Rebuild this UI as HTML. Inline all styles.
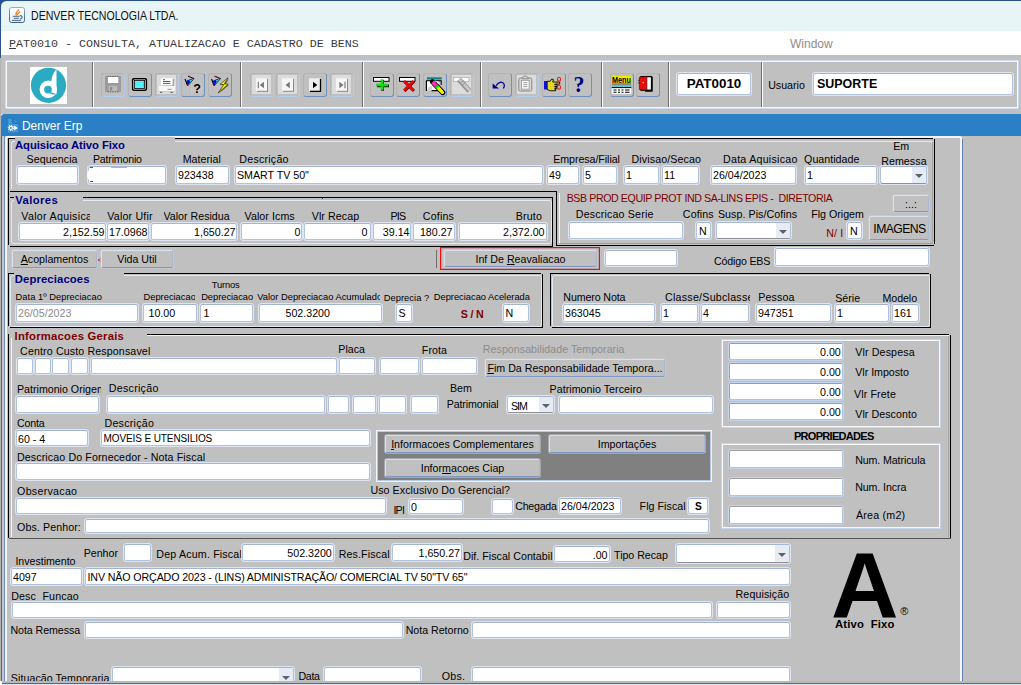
<!DOCTYPE html>
<html><head><meta charset="utf-8"><title>DENVER TECNOLOGIA LTDA.</title>
<style>
html,body{margin:0;padding:0}
body{width:1021px;height:685px;overflow:hidden;background:#c0c0c0;position:relative;
 font-family:"Liberation Sans",sans-serif;font-size:10.67px;color:#000}
div{position:absolute;box-sizing:border-box}
.ln{overflow:hidden}
.l{white-space:nowrap;line-height:14px;height:14px}
.f{background:#fff;border:1px solid #b1c2df;border-radius:2.5px;white-space:nowrap;overflow:hidden;
 box-shadow:0 0 0 1px rgba(230,238,251,.8)}
.f{border-top-color:#a2b4d3}
.s{border-top-color:#9c9ca2;border-left-color:#a2a2a8;box-shadow:0 0 0 1px #c5d4ed;border-radius:2px}
.dd{border-bottom-color:#8f9097}
.bx{border:1px solid #c6d6ef;box-shadow:inset 0 0 0 1px #f6f8fd}
.b{background:#c0c0c0;border:1px solid #d9e1ee;border-bottom-color:#7d99c4;border-right-color:#a9b9d3;border-radius:2px;
 text-align:center;white-space:nowrap;overflow:hidden;box-shadow:0 0 0 1px rgba(200,205,215,.5)}
.fi{border:1px solid #e2e9f6;border-radius:2.5px}
.tb{background:#c0c0c0;border:1px solid #b3b3b3;border-bottom-color:#7090be;border-right-color:#7090be;border-radius:3px;width:24px;height:24px;overflow:hidden}
.tb.dis{border-bottom-color:#b3cbec;border-right-color:#b3cbec}
.tb svg{position:absolute;left:0;top:0}
u{text-decoration:underline}
</style></head><body>

<div class="" style="left:0px;top:0px;width:1021px;height:31px;background:#e8f5f7"></div>
<div class="" style="left:0px;top:31px;width:1021px;height:24px;background:#fff"></div>
<div class="ln" style="left:0px;top:0px;width:1021px;height:1px;background:#2c4f8e"></div>
<div class="ln" style="left:0px;top:0px;width:1px;height:58px;background:#2c4f8e"></div>
<div class="ln" style="left:0;top:0;width:7px;height:7px;background:#27508f"><div style="left:1px;top:1px;width:12px;height:12px;background:#e8f5f7;border-top-left-radius:5.5px"></div></div>
<svg style="position:absolute;left:9px;top:7px" width="16" height="16" viewBox="0 0 16 16">
<defs><linearGradient id="jb" x1="0" y1="0" x2="0" y2="1"><stop offset="0" stop-color="#92abc6"/><stop offset="1" stop-color="#3d5f80"/></linearGradient>
<linearGradient id="jf" x1="0" y1="0" x2="0" y2="1"><stop offset="0" stop-color="#ffffff"/><stop offset="1" stop-color="#e6e8ea"/></linearGradient></defs>
<rect x="0.5" y="0.5" width="15" height="15" rx="2" fill="url(#jf)" stroke="url(#jb)"/>
<path d="M9.900 2.600L6.900 6.300l.3 2.200" stroke="#e8750a" stroke-width="1.500" fill="none" stroke-dasharray="1.300 .35"/>
<path d="M11 4.700L8.300 7l-.4 1.500" stroke="#e8750a" stroke-width="1.400" fill="none" stroke-dasharray="1.300 .35"/>
<path d="M3.800 9.300h6.800M4.900 11.300h5M3.100 13.400h8.900" stroke="#46688c" stroke-width="1" fill="none"/>
<path d="M11 8.600c2.800-.3 2.800 3.200.1 3.400" stroke="#46688c" stroke-width="1.100" fill="none"/>
</svg>
<div class="l" style="left:30.5px;top:8px;font-size:11.9px;line-height:17px;height:17px;color:#101010;transform-origin:0 0;transform:scaleX(.888)">DENVER TECNOLOGIA LTDA.</div>
<div class="l" style="left:9px;top:35.5px;font-family:'Liberation Mono',monospace;font-size:11.67px;line-height:16px;height:16px;color:#3a3a3a"><u>P</u>AT0010 - CONSULTA, ATUALIZACAO E CADASTRO DE BENS</div>
<div class="l" style="left:790px;top:36px;font-size:12px;line-height:16px;height:16px;color:#8c8c8c">Window</div>
<div class="" style="left:5px;top:60px;width:1014px;height:49px;border:1px solid #cbdbf3;border-radius:1px;box-shadow:inset 0 0 0 1px #f7f9fe"></div>
<div class="ln" style="left:92px;top:62px;width:1px;height:45px;background:#6e6e6e"></div>
<div class="ln" style="left:93px;top:62px;width:1px;height:45px;background:#fdfdfd"></div>
<div class="ln" style="left:240px;top:62px;width:1px;height:45px;background:#6e6e6e"></div>
<div class="ln" style="left:241px;top:62px;width:1px;height:45px;background:#fdfdfd"></div>
<div class="ln" style="left:362px;top:62px;width:1px;height:45px;background:#6e6e6e"></div>
<div class="ln" style="left:363px;top:62px;width:1px;height:45px;background:#fdfdfd"></div>
<div class="ln" style="left:480px;top:62px;width:1px;height:45px;background:#6e6e6e"></div>
<div class="ln" style="left:481px;top:62px;width:1px;height:45px;background:#fdfdfd"></div>
<div class="ln" style="left:601px;top:62px;width:1px;height:45px;background:#6e6e6e"></div>
<div class="ln" style="left:602px;top:62px;width:1px;height:45px;background:#fdfdfd"></div>
<div class="ln" style="left:668px;top:62px;width:1px;height:45px;background:#6e6e6e"></div>
<div class="ln" style="left:669px;top:62px;width:1px;height:45px;background:#fdfdfd"></div>
<div class="ln" style="left:761px;top:62px;width:1px;height:45px;background:#6e6e6e"></div>
<div class="ln" style="left:762px;top:62px;width:1px;height:45px;background:#fdfdfd"></div>
<svg style="position:absolute;left:30px;top:67px" width="37" height="37" viewBox="0 0 37 37">
<rect width="37" height="37" fill="#fff"/>
<circle cx="18.5" cy="18.3" r="17.6" fill="#2aabc2"/>
<circle cx="18.3" cy="22.3" r="8.7" fill="#fff"/>
<path d="M25.700 3h.8v24.300l-5.700-.3.500-12.100c.2-3.900 1.200-8 4.400-11.900z" fill="#fff"/>
<circle cx="18" cy="22.600" r="3.900" fill="#2aabc2"/>
<path d="M20 25.600c1.500.9 3.300 1.300 5 1.200" stroke="#2aabc2" stroke-width="1.300" fill="none"/>
</svg>
<div class="tb dis" style="left:101px;top:73px"><svg width="24" height="24" viewBox="0 0 24 24" style="left:-1px;top:-1px"><rect x="4" y="3" width="16" height="16" rx="1" fill="#9b9b9b"/><rect x="7" y="4" width="10.3" height="6" fill="#fff"/><rect x="7.7" y="12.7" width="8.6" height="6" fill="#bababa"/><rect x="9" y="14" width="2.2" height="3.5" fill="#8a8a8a"/><path d="M6.5 3.300h11M6.5 18.800h11" stroke="#5a5a5a" stroke-width="1" stroke-dasharray="1.2 1.2"/><rect x="4.6" y="5" width=".8" height=".8" fill="#777"/></svg></div>
<div class="tb" style="left:128px;top:73px"><svg width="24" height="24" viewBox="0 0 24 24" style="left:-1px;top:-1px"><rect x="3.9" y="4.9" width="15.2" height="13" rx="1.8" fill="#000"/><rect x="5.4" y="6.4" width="12.2" height="10" rx=".6" fill="#fff"/><rect x="6.4" y="7.4" width="10.2" height="8" fill="none" stroke="#000" stroke-width=".8"/><rect x="7" y="8" width="9" height="6.8" fill="#19e6f0"/><path d="M7.5 9h8M7.5 10.700h8M7.5 12.400h8M7.5 14.100h8" stroke="#d8ffff" stroke-width=".7" stroke-dasharray="1 1"/><path d="M8 8v7M10 8v7M12 8v7M14 8v7" stroke="#d8ffff" stroke-width=".5" stroke-dasharray="1 .7"/></svg></div>
<div class="tb dis" style="left:155px;top:73px"><svg width="24" height="24" viewBox="0 0 24 24" style="left:-1px;top:-1px"><rect x="2" y="2" width="19" height="19" fill="#dcdcdc"/><rect x="6" y="5.3" width="12" height="7.6" fill="#fff"/><path d="M18.200 6v7M6.5 13h12" stroke="#777" stroke-width=".8"/><path d="M8 6.700h2M8 8.500h7.400M8 10.400h7.400" stroke="#4a4a4a" stroke-width=".9"/><rect x="3.9" y="13.3" width="16" height="5" fill="#f6f6f6"/><path d="M4 13.600h16" stroke="#fff" stroke-width=".8"/><path d="M12.5 16.300h4" stroke="#999" stroke-width="1"/><path d="M4 18.500h16" stroke="#c4c4c4" stroke-width=".8"/><rect x="5" y="18.9" width="2.2" height="1.1" fill="#666"/><rect x="15.5" y="18.9" width="2.2" height="1.1" fill="#666"/></svg></div>
<div class="tb" style="left:181px;top:73px"><svg width="24" height="24" viewBox="0 0 24 24" style="left:-1px;top:-1px"><path d="M4 6l2.500 6.500" stroke="#000" stroke-width="1.1"/><path d="M6.5 12.800l-1.200-5 6.500-2.500z" fill="#0a0ac8"/><path d="M8.200 7.600l4.800-1.800-3.200 3.600z" fill="#16e0f0"/><path d="M7 3.200l6 2.400" stroke="#000" stroke-width="1"/><path d="M13 5.500l-6.300 7.500" stroke="#000" stroke-width=".7"/><rect x="7.8" y="2.7" width="1.3" height="1.1" fill="#e01010"/><path d="M10 11.500h11M10 13.500h11M10 15.500h11M10 17.500h11M10 19.500h11" stroke="#f4ec00" stroke-width="1" stroke-dasharray="1 1"/><text x="12.3" y="19.8" font-family="Liberation Sans" font-weight="bold" font-size="12.5" fill="#000">?</text></svg></div>
<div class="tb" style="left:208px;top:73px"><svg width="24" height="24" viewBox="0 0 24 24" style="left:-1px;top:-1px"><g transform="translate(-.5 0)"><path d="M4 6l2.500 6.500" stroke="#000" stroke-width="1.1"/><path d="M6.5 12.800l-1.200-5 6.500-2.500z" fill="#0a0ac8"/><path d="M8.200 7.600l4.800-1.800-3.200 3.600z" fill="#16e0f0"/><path d="M7 3.200l6 2.400" stroke="#000" stroke-width="1"/><path d="M13 5.500l-6.300 7.500" stroke="#000" stroke-width=".7"/><rect x="7.8" y="2.7" width="1.3" height="1.1" fill="#e01010"/></g><path d="M20.800 5.800l-7.500 6 3.500.3-5.500 8.200 9.800-8.400-3.600-.4z" fill="#6a6a6a"/><path d="M20 4.800l-8 6.500 3.800.3-5.600 8.400 10-8.800-3.800-.3z" fill="#fbf400" stroke="#000" stroke-width=".55"/></svg></div>
<div class="tb dis" style="left:250px;top:73px"><svg width="24" height="24" viewBox="0 0 24 24" style="left:-1px;top:-1px"><rect x="2" y="2" width="19" height="19" fill="#dcdcdc"/><rect x="6" y="5.3" width="11" height="12.6" fill="#f6f6f6"/><path d="M17.500 6v12.600M7 18.300h11" stroke="#8a8a8a" stroke-width="1"/><path d="M8.300 8.700v6.500" stroke="#7a7a7a" stroke-width="1.2"/><path d="M14 8.700v6.500l-4.300-3.250z" fill="#7a7a7a"/></svg></div>
<div class="tb dis" style="left:276px;top:73px"><svg width="24" height="24" viewBox="0 0 24 24" style="left:-1px;top:-1px"><rect x="2" y="2" width="19" height="19" fill="#dcdcdc"/><rect x="6" y="5.3" width="11" height="12.6" fill="#f6f6f6"/><path d="M17.500 6v12.600M7 18.300h11" stroke="#8a8a8a" stroke-width="1"/><path d="M13.8 8.700v6.500l-4.300-3.250z" fill="#7a7a7a"/></svg></div>
<div class="tb" style="left:303px;top:73px"><svg width="24" height="24" viewBox="0 0 24 24" style="left:-1px;top:-1px"><rect x="6" y="5.3" width="11" height="12.6" fill="#efefef"/><path d="M17.500 6v12.600M7 18.300h11" stroke="#000" stroke-width="1.3"/><path d="M10 8.700v6.500l4.300-3.250z" fill="#000"/></svg></div>
<div class="tb dis" style="left:330px;top:73px"><svg width="24" height="24" viewBox="0 0 24 24" style="left:-1px;top:-1px"><rect x="2" y="2" width="19" height="19" fill="#dcdcdc"/><rect x="6" y="5.3" width="11" height="12.6" fill="#f6f6f6"/><path d="M17.500 6v12.600M7 18.300h11" stroke="#8a8a8a" stroke-width="1"/><path d="M15 8.700v6.500" stroke="#7a7a7a" stroke-width="1.2"/><path d="M9.3 8.700v6.500l4.300-3.250z" fill="#7a7a7a"/></svg></div>
<div class="tb" style="left:370px;top:73px"><svg width="24" height="24" viewBox="0 0 24 24" style="left:-1px;top:-1px"><rect x="3.5" y="4.5" width="15.5" height="3.8" fill="#fff" stroke="#000" stroke-width="1"/><path d="M12.600 7v10.800M7 12.800h12" stroke="#002000" stroke-width="2.800"/><path d="M12 6.200v10.800M6.200 12h11.800" stroke="#10dc10" stroke-width="2.700"/></svg></div>
<div class="tb" style="left:396px;top:73px"><svg width="24" height="24" viewBox="0 0 24 24" style="left:-1px;top:-1px"><rect x="3.5" y="4.5" width="15.5" height="3.8" fill="#fff" stroke="#000" stroke-width="1"/><path d="M8.500 8.500l9.500 9.500M18 8.500L8.500 18" stroke="#5a0000" stroke-width="3"/><path d="M8 8l9.500 9.500M17.500 8L8 17.500" stroke="#e00b0b" stroke-width="2.6"/></svg></div>
<div class="tb" style="left:423px;top:73px"><svg width="24" height="24" viewBox="0 0 24 24" style="left:-1px;top:-1px"><rect x="4" y="4.3" width="14.7" height="2.2" fill="#0d8484"/><rect x="3" y="7.2" width="15.7" height="1.1" fill="#000"/><rect x="3.5" y="8.5" width="12" height="9" fill="#fff"/><path d="M3.400 8v10" stroke="#000" stroke-width="1.2"/><path d="M8 17.600h7" stroke="#000" stroke-width="1.3"/><path d="M18.200 8v4" stroke="#000" stroke-width="1"/><path d="M4 18a5 5 0 015-5v5z" fill="#c8c8c8" opacity=".8"/><path d="M9.500 8.800l10.300 10.800" stroke="#000" stroke-width="5.2" stroke-linecap="round"/><path d="M9.600 9l3.700 3.900" stroke="#ff1cc0" stroke-width="3.8"/><path d="M13.300 12.900l2.500 2.600" stroke="#10e010" stroke-width="3.800"/><path d="M15.800 15.500l3.600 3.800" stroke="#f4f000" stroke-width="3.4" stroke-linecap="round"/><path d="M10.200 9.800l1.500 1.500" stroke="#ffe000" stroke-width="1"/><path d="M11.500 8l1.800 .5" stroke="#16e0f0" stroke-width="1.4"/></svg></div>
<div class="tb dis" style="left:450px;top:73px"><svg width="24" height="24" viewBox="0 0 24 24" style="left:-1px;top:-1px"><rect x="2" y="2" width="19" height="19" fill="#dcdcdc"/><rect x="3.5" y="4.5" width="15.5" height="3.8" fill="#fff" stroke="#b0b0b0" stroke-width=".8"/><path d="M9 6.500l10.500 11.500" stroke="#8e8e8e" stroke-width="5"/><path d="M9.300 6.200l10.500 11.500" stroke="#c6c6c6" stroke-width="3"/><path d="M10 10.500l3.500-3M12 12.500l3.500-3" stroke="#8a8a8a" stroke-width=".9"/></svg></div>
<div class="tb" style="left:488px;top:73px"><svg width="24" height="24" viewBox="0 0 24 24" style="left:-1px;top:-1px"><path d="M8.300 12.600C9.800 9.600 13 8.600 14.800 9.700c1.900 1.200 1.700 3.700.6 5.800" fill="none" stroke="#00008c" stroke-width="1.250"/><path d="M4.600 10.400v5.200h6.400z" fill="#00008c"/></svg></div>
<div class="tb dis" style="left:515px;top:73px"><svg width="24" height="24" viewBox="0 0 24 24" style="left:-1px;top:-1px"><rect x="2" y="2" width="19" height="19" fill="#dcdcdc"/><rect x="3.8" y="5" width="13" height="13" rx="1.5" fill="#d6d6d6" stroke="#868686" stroke-width="1"/><path d="M7.300 5.800c0-3.600 6-3.600 6 0z" fill="#d0d0d0" stroke="#868686" stroke-width=".9"/><rect x="6.6" y="7.3" width="7.5" height="8.8" fill="#fafafa" stroke="#8c8c8c" stroke-width=".7"/><path d="M8.300 9.700h4M8.300 11.700h4M8.300 13.700h4" stroke="#8a8a8a" stroke-width=".8"/></svg></div>
<div class="tb" style="left:542px;top:73px"><svg width="24" height="24" viewBox="0 0 24 24" style="left:-1px;top:-1px"><rect x="2" y="8" width="3" height="8.500" fill="#0a14e6"/><path d="M5.200 8.300h3l1.500-2.300 1.700.6-.7 2.500h7v2h-5v.7h2.500v1.600h-2.500v.7h2v1.500h-2v.6h1v1.500H8.500l-3.300-1.200z" fill="#f0e428" stroke="#000" stroke-width=".9"/><path d="M6.500 10h5M6.500 12h6M6.500 14h6M7.500 16h4" stroke="#a89800" stroke-width=".6" stroke-dasharray=".8 .8"/><ellipse cx="17" cy="6.200" rx="1.600" ry="2" fill="none" stroke="#f41414" stroke-width="1.100"/><ellipse cx="17" cy="14.300" rx="1.600" ry="2" fill="none" stroke="#f41414" stroke-width="1.100"/><path d="M16.500 8.200l-1.500 2 1.500 2.100" stroke="#f41414" stroke-width="1" fill="none"/></svg></div>
<div class="tb" style="left:568px;top:73px"><svg width="24" height="24" viewBox="0 0 24 24" style="left:-1px;top:-1px"><text x="5.600" y="18.700" font-family="Liberation Serif" font-weight="bold" font-size="23" fill="#000080" textLength="11" lengthAdjust="spacingAndGlyphs">?</text></svg></div>
<div class="tb" style="left:610px;top:73px"><svg width="24" height="24" viewBox="0 0 24 24" style="left:-1px;top:-1px"><rect x="1.8" y="3" width="19.5" height="7.8" fill="#f4ec00"/><text x="2" y="10" font-family="Liberation Sans" font-weight="bold" font-size="9" fill="#000" textLength="19" lengthAdjust="spacingAndGlyphs">Menu</text><path d="M2 11h19" stroke="#000" stroke-width=".6"/><rect x="1.8" y="12.2" width="19.5" height="1.4" fill="#14d8e6"/><rect x="1.8" y="14" width="19.5" height="1.1" fill="#000"/><rect x="1.8" y="15.3" width="19.5" height="5.5" fill="#fff"/><path d="M3.500 17h3M8 17h2M11.500 17h2M15 17h4.500M3.500 19.300h3M8 19.300h2M11.500 19.300h2M15 19.300h4.500" stroke="#000" stroke-width="1.1"/></svg></div>
<div class="tb" style="left:636px;top:73px"><svg width="24" height="24" viewBox="0 0 24 24" style="left:-1px;top:-1px"><rect x="5" y="3.6" width="10.5" height="13.6" fill="#fff" stroke="#000" stroke-width="1.3"/><path d="M3.300 4.200l7.600-.6v13.600l-7.600-.7z" fill="#e60e0e" stroke="#500" stroke-width=".6"/><rect x="6.6" y="9" width="1.3" height="1.3" fill="#f8e800"/><path d="M2.200 7.300h1.300M2.200 9.800h1.300" stroke="#000" stroke-width=".9"/><path d="M9 18h7.500M16 4v14" stroke="#000" stroke-width="1.5"/></svg></div>
<div class="f" style="left:677px;top:73px;width:74px;height:22px;line-height:20px;text-align:center;font-weight:bold;font-size:13.400px;">PAT0010</div>
<div class="l" style="left:768.17px;top:78.30px;">Usuario</div>
<div class="f" style="left:813px;top:73px;width:200px;height:22px;line-height:20px;padding-left:3px;font-weight:bold;font-size:13.400px;"><span style="display:inline-block;transform-origin:0 50%;transform:scaleX(.93)">SUPORTE</span></div>
<div class="" style="left:1px;top:114px;width:1020px;height:22px;background:#2b80c5;border-top-left-radius:3px"></div>
<div class="ln" style="left:1px;top:114px;width:2px;height:2px;background:#e8eef6;clip-path:polygon(0 0,100% 0,0 100%)"></div>
<svg style="position:absolute;left:6px;top:116.5px" width="15" height="17" viewBox="0 0 14 16">
<path d="M1 1h5v5h6v9H1z" fill="#3f98d8" stroke="#236fb0" stroke-width=".7"/>
<path d="M7.500 1.500l3.500 3.500h-3.500z" fill="#3f98d8" stroke="#2a78bc" stroke-width=".5"/>
<path d="M7.600 8v4.600l3.600-2.300z" fill="#fff"/>
<circle cx="4.500" cy="10.300" r="1.500" fill="none" stroke="#fff" stroke-width="1"/>
<circle cx="4.500" cy="10.300" r="2.400" fill="none" stroke="#fff" stroke-width="1" stroke-dasharray=".9 .98"/>
</svg>
<div class="l" style="left:22px;top:117.7px;font-size:12.7px;line-height:17px;height:17px;color:#fff;transform-origin:0 0;transform:scaleX(.94)">Denver Erp</div>
<div class="ln" style="left:0px;top:58px;width:1px;height:627px;background:#b4b4b4"></div>
<div class="ln" style="left:1px;top:136px;width:1px;height:547px;background:#3d65a2"></div>
<div class="ln" style="left:2px;top:136px;width:2px;height:547px;background:#c8c8c8"></div>
<div class="ln" style="left:4px;top:136px;width:1px;height:546px;background:#6a8cc0"></div>
<div class="" style="left:5px;top:136px;width:957px;height:546px;border:2px solid #f2f5fc;border-bottom:0;border-radius:2.5px 2.5px 0 0"></div>
<div class="ln" style="left:962px;top:139px;width:1px;height:542px;background:#5f80b0"></div>
<div class="ln" style="left:2px;top:681px;width:1019px;height:2px;background:#b8b8b8"></div>
<div class="ln" style="left:1px;top:683px;width:1020px;height:1px;background:#4a6b9c"></div>
<div class="ln" style="left:0px;top:684px;width:1021px;height:1px;background:#d6e4f8"></div>
<div class="ln" style="left:0;top:681px;width:2px;height:4px;background:#fff"></div>
<div class="fi" style="left:11px;top:141px;width:922px;height:48px;border-bottom:0;border-radius:2.5px 2.5px 0 0"></div>
<div class="ln" style="left:8px;top:138px;width:925px;height:1px;background:#000"></div>
<div class="ln" style="left:8px;top:138px;width:1px;height:107px;background:#000"></div>
<div class="ln" style="left:934px;top:139px;width:1px;height:105px;background:#000"></div>
<div class="ln" style="left:10px;top:191px;width:547px;height:1px;background:#000"></div>
<div class="ln" style="left:556px;top:191px;width:1px;height:55px;background:#000"></div>
<div class="ln" style="left:556px;top:245px;width:378px;height:1px;background:#000"></div>
<div class="ln" style="left:559px;top:193px;width:1px;height:50px;background:#f4f6fa"></div>
<div class="ln" style="left:560px;top:243px;width:373px;height:1px;background:#9c9c9c"></div>
<div class="ln" style="left:932px;top:142px;width:1px;height:102px;background:#a4a4a4"></div>
<div class="ln" style="left:15px;top:137px;width:160px;height:6px;background:#c0c0c0"></div>
<div class="l" style="left:15.04px;top:138.08px;color:#000080;font-weight:bold;font-size:11.3px;letter-spacing:-0.074px;">Aquisicao Ativo Fixo</div>
<div class="l" style="left:26.50px;top:152.30px;letter-spacing:0.086px;">Sequencia</div>
<div class="l" style="left:92.97px;top:152.30px;letter-spacing:-0.207px;">Patrimonio</div>
<div class="l" style="left:182.67px;top:152.30px;letter-spacing:0.039px;">Material</div>
<div class="l" style="left:239.37px;top:152.30px;letter-spacing:0.215px;">Descrição</div>
<div class="l" style="left:553.17px;top:152.30px;letter-spacing:-0.055px;">Empresa/Filial</div>
<div class="l" style="left:631.57px;top:152.30px;letter-spacing:0.105px;">Divisao/Secao</div>
<div class="l" style="left:723.07px;top:152.30px;letter-spacing:0.243px;">Data Aquisicao</div>
<div class="l" style="left:804.10px;top:152.30px;letter-spacing:0.015px;">Quantidade</div>
<div class="l" style="left:893.17px;top:139.30px;letter-spacing:-0.105px;">Em</div>
<div class="l" style="left:881.17px;top:154.30px;letter-spacing:0.073px;">Remessa</div>
<div class="f" style="left:17px;top:166px;width:61px;height:18px;line-height:16px;padding-left:1px;"></div>
<div class="f" style="left:88px;top:166px;width:78px;height:18px;line-height:16px;padding-left:1px;"></div>
<div class="ln" style="left:87px;top:168px;width:14px;height:14px;background:#fff;border-radius:50%"></div>
<div class="ln" style="left:111px;top:167px;width:16px;height:1px;background:#a9b7cf"></div>
<div class="ln" style="left:90px;top:167px;width:3px;height:1px;background:#44557f"></div>
<div class="ln" style="left:90px;top:181px;width:3px;height:1px;background:#44557f"></div>
<div class="f" style="left:176px;top:166px;width:53px;height:18px;line-height:16px;padding-left:1px;">923438</div>
<div class="f" style="left:235px;top:166px;width:308px;height:18px;line-height:16px;padding-left:1px;">SMART TV 50"</div>
<div class="f" style="left:547px;top:166px;width:32px;height:18px;line-height:16px;padding-left:1px;">49</div>
<div class="f" style="left:583px;top:166px;width:34px;height:18px;line-height:16px;padding-left:1px;">5</div>
<div class="f" style="left:624px;top:166px;width:35px;height:18px;line-height:16px;padding-left:1px;">1</div>
<div class="f" style="left:662px;top:166px;width:37px;height:18px;line-height:16px;padding-left:1px;">11</div>
<div class="f" style="left:711px;top:166px;width:85px;height:18px;line-height:16px;padding-left:1px;">26/04/2023</div>
<div class="f" style="left:805px;top:166px;width:72px;height:18px;line-height:16px;padding-left:1px;">1</div>
<div class="f dd" style="left:880px;top:166px;width:47px;height:18px;line-height:16px;padding-left:5px;"><div style="position:absolute;right:0;top:0;bottom:0;width:14px;background:#e6ebf4"></div><div style="position:absolute;right:3px;top:7px;width:0;height:0;border-left:4px solid transparent;border-right:4px solid transparent;border-top:4px solid #5f6070"></div></div>
<div class="fi" style="left:11px;top:200px;width:541px;height:44px"></div>
<div class="ln" style="left:10px;top:197px;width:543px;height:1px;background:#000"></div>
<div class="ln" style="left:552px;top:197px;width:1px;height:49px;background:#000"></div>
<div class="ln" style="left:10px;top:246px;width:543px;height:1px;background:#000"></div>
<div class="ln" style="left:14px;top:195px;width:69px;height:9px;background:#c0c0c0"></div>
<div class="ln" style="left:322px;top:198px;width:1px;height:1px;background:#333"></div>
<div class="l" style="left:15.21px;top:193.08px;color:#000080;font-weight:bold;font-size:11.3px;letter-spacing:0.377px;">Valores</div>
<div class="l" style="left:21.30px;top:209.30px;width:69.00px;overflow:hidden;letter-spacing:0.300px;">Valor Aquisicao</div>
<div class="l" style="left:107.30px;top:209.30px;letter-spacing:0.187px;">Valor Ufir</div>
<div class="l" style="left:163.50px;top:209.30px;width:66.50px;overflow:hidden;">Valor Residual</div>
<div class="l" style="left:244.50px;top:209.30px;letter-spacing:0.071px;">Valor Icms</div>
<div class="l" style="left:311.70px;top:209.30px;letter-spacing:0.084px;">Vlr Recap</div>
<div class="l" style="left:390.57px;top:209.30px;letter-spacing:-0.800px;">PIS</div>
<div class="l" style="left:422.80px;top:209.30px;letter-spacing:0.175px;">Cofins</div>
<div class="l" style="left:515.67px;top:209.30px;letter-spacing:0.211px;">Bruto</div>
<div class="f" style="left:19px;top:223px;width:87px;height:17px;line-height:15px;padding-top:1px;text-align:right;padding-right:0.5px;">2,152.59</div>
<div class="f" style="left:107px;top:223px;width:42px;height:17px;line-height:15px;padding-top:1px;padding-left:1px;">17.0968</div>
<div class="f" style="left:151px;top:223px;width:86px;height:17px;line-height:15px;padding-top:1px;text-align:right;padding-right:0.5px;">1,650.27</div>
<div class="f" style="left:241px;top:223px;width:61px;height:17px;line-height:15px;padding-top:1px;text-align:right;padding-right:0.5px;">0</div>
<div class="f" style="left:304px;top:223px;width:67px;height:17px;line-height:15px;padding-top:1px;text-align:right;padding-right:2.5px;">0</div>
<div class="f" style="left:373px;top:223px;width:38px;height:17px;line-height:15px;padding-top:1px;text-align:right;padding-right:0.5px;">39.14</div>
<div class="f" style="left:413px;top:223px;width:42px;height:17px;line-height:15px;padding-top:1px;text-align:right;padding-right:1.5px;">180.27</div>
<div class="f" style="left:459px;top:223px;width:88px;height:17px;line-height:15px;padding-top:1px;text-align:right;padding-right:1.5px;">2,372.00</div>
<div class="l" style="left:566.67px;top:191.30px;color:#800000;letter-spacing:-0.425px;">BSB PROD EQUIP PROT IND SA-LINS EPIS - &nbsp;DIRETORIA</div>
<div class="l" style="left:575.87px;top:207.30px;letter-spacing:0.163px;">Descricao Serie</div>
<div class="l" style="left:682.80px;top:207.30px;letter-spacing:0.135px;">Cofins</div>
<div class="l" style="left:717.90px;top:207.30px;letter-spacing:0.064px;">Susp. Pis/Cofins</div>
<div class="l" style="left:811.17px;top:207.30px;">Flg Origem</div>
<div class="f" style="left:569px;top:222px;width:114px;height:17px;line-height:15px;padding-top:1px;padding-left:1px;"></div>
<div class="f" style="left:696px;top:222px;width:15px;height:17px;line-height:15px;padding-top:1px;padding-left:2px;">N</div>
<div class="f dd" style="left:716px;top:222px;width:75px;height:17px;line-height:15px;padding-left:5px;padding-top:1px;"><div style="position:absolute;right:0;top:0;bottom:0;width:14px;background:#e6ebf4"></div><div style="position:absolute;right:3px;top:7px;width:0;height:0;border-left:4px solid transparent;border-right:4px solid transparent;border-top:4px solid #5f6070"></div></div>
<div class="l" style="left:826.37px;top:226.30px;color:#800000;letter-spacing:0.054px;">N/ I</div>
<div class="f" style="left:847px;top:222px;width:15px;height:17px;line-height:15px;padding-top:1px;padding-left:2px;">N</div>
<div class="b" style="left:893px;top:195px;width:36px;height:17px;line-height:15px;padding-top:1px;">:..:</div>
<div class="b" style="left:869px;top:216px;width:60px;height:24px;line-height:22px;font-size:12.2px;letter-spacing:-.55px;padding-top:1.3px;padding-left:1px;">IMAGENS</div>
<div class="b" style="left:12px;top:250px;width:85px;height:18px;line-height:16px;"><u>A</u>coplamentos</div>
<div class="l" style="left:97.5px;top:253px;color:#e02020;font-size:9px;width:3px;overflow:hidden">&lt;</div>
<div class="b" style="left:101px;top:250px;width:72px;height:18px;line-height:16px;">Vida Util</div>
<div class="ln" style="left:436px;top:250px;width:1px;height:18px;background:#707070"></div>
<div class="" style="left:440px;top:247px;width:160px;height:23px;border:1px solid #f40b0b;box-shadow:inset 0 0 0 .5px rgba(255,0,0,.35)"></div>
<div class="b" style="left:444px;top:250px;width:153px;height:17px;line-height:15px;padding-top:1px;">Inf De <u>R</u>eavaliacao</div>
<div class="f" style="left:605px;top:250px;width:72px;height:16px;line-height:14px;padding-left:1px;"></div>
<div class="l" style="left:714.10px;top:254.30px;letter-spacing:-0.198px;">Código EBS</div>
<div class="f" style="left:775px;top:248px;width:154px;height:18px;line-height:16px;padding-left:1px;"></div>
<div class="fi" style="left:10px;top:275px;width:532px;height:52px;border-color:#e2e9f6"></div>
<div class="ln" style="left:8px;top:273px;width:533px;height:1px;background:#000"></div>
<div class="ln" style="left:8px;top:273px;width:1px;height:53px;background:#000"></div>
<div class="ln" style="left:542px;top:274px;width:1px;height:54px;background:#000"></div>
<div class="ln" style="left:10px;top:327px;width:533px;height:1px;background:#000"></div>
<div class="ln" style="left:14px;top:272px;width:110px;height:6px;background:#c0c0c0"></div>
<div class="l" style="left:14.79px;top:272.08px;color:#000080;font-weight:bold;font-size:11.3px;letter-spacing:0.109px;">Depreciacoes</div>
<div class="l" style="left:15.57px;top:289.77px;font-size:9.33px;letter-spacing:0.024px;">Data 1º Depreciacao</div>
<div class="l" style="left:143.47px;top:289.77px;font-size:9.33px;width:51.73px;overflow:hidden;">Depreciacao</div>
<div class="l" style="left:211.68px;top:277.77px;font-size:9.33px;letter-spacing:-0.122px;">Turnos</div>
<div class="l" style="left:201.17px;top:289.77px;font-size:9.33px;letter-spacing:-0.034px;">Depreciacao</div>
<div class="l" style="left:257.30px;top:289.77px;font-size:9.33px;width:123.00px;overflow:hidden;">Valor Depreciacao Acumulado</div>
<div class="l" style="left:383.67px;top:290.77px;font-size:9.33px;letter-spacing:0.056px;">Deprecia ?</div>
<div class="l" style="left:433.77px;top:289.77px;font-size:9.33px;letter-spacing:-0.014px;">Depreciacao Acelerada</div>
<div class="f" style="left:16px;top:304px;width:122px;height:18px;line-height:16px;padding-left:1px;color:#8a8a8a;">26/05/2023</div>
<div class="f" style="left:143px;top:304px;width:54px;height:18px;line-height:16px;padding-left:4.5px;">10.00</div>
<div class="f" style="left:200px;top:304px;width:53px;height:18px;line-height:16px;padding-left:2.5px;">1</div>
<div class="f" style="left:259px;top:304px;width:123px;height:18px;line-height:16px;padding-left:25.5px;">502.3200</div>
<div class="f" style="left:396px;top:304px;width:16px;height:18px;line-height:16px;padding-left:1.5px;">S</div>
<div class="l" style="left:460.67px;top:307.30px;color:#800000;font-weight:bold;letter-spacing:-0.168px;">S / N</div>
<div class="f" style="left:503px;top:304px;width:26px;height:18px;line-height:16px;padding-left:1.5px;">N</div>
<div class="fi" style="left:552px;top:275px;width:378px;height:52px;border-color:#e2e9f6"></div>
<div class="ln" style="left:550px;top:273px;width:379px;height:1px;background:#000"></div>
<div class="ln" style="left:550px;top:273px;width:1px;height:53px;background:#000"></div>
<div class="ln" style="left:930px;top:274px;width:1px;height:54px;background:#000"></div>
<div class="ln" style="left:552px;top:327px;width:379px;height:1px;background:#000"></div>
<div class="l" style="left:563.37px;top:290.30px;letter-spacing:-0.129px;">Numero Nota</div>
<div class="l" style="left:665.00px;top:290.30px;width:84.50px;overflow:hidden;letter-spacing:0.250px;">Classe/Subclasse</div>
<div class="l" style="left:758.17px;top:290.30px;letter-spacing:0.151px;">Pessoa</div>
<div class="l" style="left:835.20px;top:291.30px;letter-spacing:0.023px;">Série</div>
<div class="l" style="left:882.57px;top:291.30px;letter-spacing:-0.092px;">Modelo</div>
<div class="f" style="left:563px;top:304px;width:92px;height:18px;line-height:16px;padding-left:1px;">363045</div>
<div class="f" style="left:661px;top:304px;width:37px;height:18px;line-height:16px;padding-left:1px;">1</div>
<div class="f" style="left:701px;top:304px;width:48px;height:18px;line-height:16px;padding-left:1px;">4</div>
<div class="f" style="left:756px;top:304px;width:75px;height:18px;line-height:16px;padding-left:1px;">947351</div>
<div class="f" style="left:835px;top:304px;width:54px;height:18px;line-height:16px;padding-left:1px;">1</div>
<div class="f" style="left:892px;top:304px;width:27px;height:18px;line-height:16px;padding-left:1px;">161</div>
<div class="ln" style="left:147px;top:335px;width:802px;height:1px;background:#f4f5f8"></div>
<div class="ln" style="left:11px;top:338px;width:1px;height:199px;background:#f4f5f8"></div>
<div class="ln" style="left:948px;top:336px;width:1px;height:201px;background:#a8a8a8"></div>
<div class="ln" style="left:8px;top:334px;width:941px;height:1px;background:#000"></div>
<div class="ln" style="left:8px;top:334px;width:1px;height:204px;background:#000"></div>
<div class="ln" style="left:950px;top:335px;width:1px;height:204px;background:#000"></div>
<div class="ln" style="left:9px;top:538px;width:942px;height:1px;background:#555"></div>
<div class="ln" style="left:9px;top:332px;width:138px;height:6px;background:#c0c0c0"></div>
<div class="l" style="left:14.59px;top:329.08px;color:#800000;font-weight:bold;font-size:11.3px;letter-spacing:0.221px;">Informacoes Gerais</div>
<div class="l" style="left:20.10px;top:344.30px;letter-spacing:0.122px;">Centro Custo Responsavel</div>
<div class="f" style="left:17px;top:358px;width:16px;height:16px;line-height:14px;padding-left:1px;"></div>
<div class="f" style="left:35px;top:358px;width:16px;height:16px;line-height:14px;padding-left:1px;"></div>
<div class="f" style="left:52px;top:358px;width:17px;height:16px;line-height:14px;padding-left:1px;"></div>
<div class="f" style="left:71px;top:358px;width:17px;height:16px;line-height:14px;padding-left:1px;"></div>
<div class="f" style="left:91px;top:358px;width:246px;height:16px;line-height:14px;padding-left:1px;"></div>
<div class="l" style="left:338.37px;top:342.30px;letter-spacing:-0.031px;">Placa</div>
<div class="f" style="left:339px;top:358px;width:36px;height:16px;line-height:14px;padding-left:1px;"></div>
<div class="f" style="left:380px;top:358px;width:39px;height:16px;line-height:14px;padding-left:1px;"></div>
<div class="l" style="left:421.87px;top:343.30px;letter-spacing:0.031px;">Frota</div>
<div class="f" style="left:422px;top:358px;width:55px;height:16px;line-height:14px;padding-left:1px;"></div>
<div class="l" style="left:482.87px;top:342.30px;color:#8c8c8c;letter-spacing:0.034px;">Responsabilidade Temporaria</div>
<div class="b" style="left:485px;top:359px;width:180px;height:18px;line-height:16px;"><u>F</u>im Da Responsabilidade Tempora...</div>
<div class="l" style="left:16.97px;top:382.30px;width:84.53px;overflow:hidden;">Patrimonio Origem</div>
<div class="l" style="left:108.77px;top:381.30px;letter-spacing:0.277px;">Descrição</div>
<div class="f" style="left:16px;top:396px;width:83px;height:17px;line-height:15px;padding-top:1px;padding-left:1px;"></div>
<div class="f" style="left:107px;top:396px;width:218px;height:17px;line-height:15px;padding-top:1px;padding-left:1px;"></div>
<div class="f" style="left:328px;top:396px;width:21px;height:17px;line-height:15px;padding-top:1px;padding-left:1px;"></div>
<div class="f" style="left:353px;top:396px;width:23px;height:17px;line-height:15px;padding-top:1px;padding-left:1px;"></div>
<div class="f" style="left:379px;top:396px;width:27px;height:17px;line-height:15px;padding-top:1px;padding-left:1px;"></div>
<div class="f" style="left:411px;top:396px;width:27px;height:17px;line-height:15px;padding-top:1px;padding-left:1px;"></div>
<div class="l" style="left:449.97px;top:381.30px;letter-spacing:-0.053px;">Bem</div>
<div class="l" style="left:446.77px;top:397.30px;letter-spacing:-0.145px;">Patrimonial</div>
<div class="f dd" style="left:507px;top:396px;width:47px;height:17px;line-height:15px;padding-left:5px;padding-top:1px;letter-spacing:-1px;padding-top:2px;padding-left:3px;">SIM<div style="position:absolute;right:0;top:0;bottom:0;width:14px;background:#e6ebf4"></div><div style="position:absolute;right:3px;top:7px;width:0;height:0;border-left:4px solid transparent;border-right:4px solid transparent;border-top:4px solid #5f6070"></div></div>
<div class="l" style="left:549.57px;top:382.30px;letter-spacing:0.042px;">Patrimonio Terceiro</div>
<div class="f" style="left:559px;top:396px;width:154px;height:17px;line-height:15px;padding-top:1px;padding-left:1px;"></div>
<div class="l" style="left:17.10px;top:416.30px;letter-spacing:-0.202px;">Conta</div>
<div class="l" style="left:104.47px;top:416.30px;letter-spacing:0.252px;">Descrição</div>
<div class="f" style="left:16px;top:430px;width:72px;height:16px;line-height:14px;padding-left:1px;padding-top:1px;">60 - 4</div>
<div class="f" style="left:101px;top:430px;width:269px;height:16px;line-height:14px;padding-left:1.5px;font-size:10px;letter-spacing:-.1px;padding-top:1px;">MOVEIS E UTENSILIOS</div>
<div class="l" style="left:16.97px;top:450.30px;letter-spacing:0.109px;">Descricao Do Fornecedor - Nota Fiscal</div>
<div class="f" style="left:16px;top:463px;width:354px;height:17px;line-height:15px;padding-top:1px;padding-left:1px;"></div>
<div class="l" style="left:17.10px;top:484.30px;letter-spacing:0.278px;">Observacao</div>
<div class="f" style="left:16px;top:498px;width:370px;height:16px;line-height:14px;padding-left:1px;"></div>
<div class="l" style="left:17.10px;top:520.30px;letter-spacing:0.079px;">Obs. Penhor:</div>
<div class="f" style="left:85px;top:519px;width:624px;height:14px;line-height:12px;padding-left:1px;"></div>
<div class="" style="left:376px;top:430px;width:336px;height:52px;background:#808080;border:1px solid #f2f5fc;box-shadow:inset 0 0 0 1px #b4caec"></div>
<div class="b" style="left:385px;top:435px;width:155px;height:18px;line-height:16px;"><u>I</u>nformacoes Complementares</div>
<div class="b" style="left:549px;top:435px;width:156px;height:18px;line-height:16px;">Importações</div>
<div class="b" style="left:385px;top:459px;width:155px;height:18px;line-height:16px;">Infor<u>m</u>acoes Ciap</div>
<div class="l" style="left:370.47px;top:483.30px;letter-spacing:0.059px;">Uso Exclusivo Do Gerencial?</div>
<div class="l" style="left:393.38px;top:503.30px;letter-spacing:-0.735px;">IPI</div>
<div class="f" style="left:409px;top:499px;width:54px;height:15px;line-height:13px;padding-top:1px;padding-left:1px;">0</div>
<div class="f" style="left:492px;top:499px;width:21px;height:15px;line-height:13px;padding-top:1px;padding-left:1px;"></div>
<div class="l" style="left:515.30px;top:499.30px;letter-spacing:-0.274px;">Chegada</div>
<div class="f" style="left:559px;top:498px;width:62px;height:16px;line-height:14px;padding-left:1px;">26/04/2023</div>
<div class="l" style="left:639.57px;top:499.30px;letter-spacing:0.056px;">Flg Fiscal</div>
<div class="f" style="left:688px;top:498px;width:20px;height:16px;line-height:14px;text-align:center;font-weight:bold;font-size:10.2px;padding-top:1px;padding-left:1px;">S</div>
<div class="bx" style="left:721px;top:339px;width:220px;height:89px;"></div>
<div class="f s" style="left:729px;top:343px;width:114px;height:17px;line-height:15px;padding-top:1px;text-align:right;padding-right:1.25px;">0.00</div>
<div class="f s" style="left:729px;top:363px;width:114px;height:17px;line-height:15px;padding-top:1px;text-align:right;padding-right:1.25px;">0.00</div>
<div class="f s" style="left:729px;top:383px;width:114px;height:17px;line-height:15px;padding-top:1px;text-align:right;padding-right:1.25px;">0.00</div>
<div class="f s" style="left:729px;top:403px;width:114px;height:17px;line-height:15px;padding-top:1px;text-align:right;padding-right:1.25px;">0.00</div>
<div class="l" style="left:855.30px;top:345.30px;letter-spacing:0.122px;">Vlr Despesa</div>
<div class="l" style="left:855.30px;top:365.30px;letter-spacing:-0.032px;">Vlr Imposto</div>
<div class="l" style="left:854.00px;top:387.30px;letter-spacing:0.123px;">Vlr Frete</div>
<div class="l" style="left:855.30px;top:407.30px;letter-spacing:0.047px;">Vlr Desconto</div>
<div class="l" style="left:793.91px;top:429.19px;font-weight:bold;font-size:11px;letter-spacing:-0.688px;">PROPRIEDADES</div>
<div class="bx" style="left:721px;top:443px;width:220px;height:86px;"></div>
<div class="f s" style="left:729px;top:450px;width:114px;height:18px;line-height:16px;padding-left:1px;"></div>
<div class="f s" style="left:729px;top:478px;width:114px;height:18px;line-height:16px;padding-left:1px;"></div>
<div class="f s" style="left:729px;top:506px;width:114px;height:18px;line-height:16px;padding-left:1px;"></div>
<div class="l" style="left:855.17px;top:453.30px;letter-spacing:-0.111px;">Num. Matricula</div>
<div class="l" style="left:855.17px;top:480.30px;letter-spacing:-0.104px;">Num. Incra</div>
<div class="l" style="left:856.00px;top:508.30px;letter-spacing:0.217px;">Área (m2)</div>
<div class="l" style="left:15.38px;top:554.30px;letter-spacing:-0.026px;">Investimento</div>
<div class="l" style="left:83.67px;top:546.30px;">Penhor</div>
<div class="f" style="left:124px;top:544px;width:27px;height:17px;line-height:15px;padding-top:1px;padding-left:1px;"></div>
<div class="l" style="left:156.37px;top:547.30px;letter-spacing:0.171px;">Dep Acum. Fiscal</div>
<div class="f" style="left:242px;top:544px;width:92px;height:17px;line-height:15px;padding-top:1px;text-align:right;padding-right:1.25px;">502.3200</div>
<div class="l" style="left:338.67px;top:547.30px;letter-spacing:0.137px;">Res.Fiscal</div>
<div class="f" style="left:392px;top:544px;width:70px;height:17px;line-height:15px;padding-top:1px;text-align:right;padding-right:1px;">1,650.27</div>
<div class="l" style="left:463.17px;top:549.30px;letter-spacing:0.029px;">Dif. Fiscal Contabil</div>
<div class="f" style="left:554px;top:546px;width:56px;height:16px;line-height:14px;text-align:right;padding-right:1.5px;padding-top:1px;">.00</div>
<div class="l" style="left:614.05px;top:548.30px;letter-spacing:-0.035px;">Tipo Recap</div>
<div class="f dd" style="left:676px;top:544px;width:114px;height:19px;line-height:17px;padding-left:5px;padding-top:1px;"><div style="position:absolute;right:0;top:0;bottom:0;width:14px;background:#e6ebf4"></div><div style="position:absolute;right:3px;top:8px;width:0;height:0;border-left:4px solid transparent;border-right:4px solid transparent;border-top:4px solid #5f6070"></div></div>
<div class="f" style="left:11px;top:568px;width:71px;height:17px;line-height:15px;padding-top:1px;padding-left:1px;">4097</div>
<div class="f" style="left:85px;top:568px;width:705px;height:17px;line-height:15px;padding-top:1px;padding-left:1.5px;letter-spacing:-.12px;">INV NÃO ORÇADO 2023 - (LINS) ADMINISTRAÇÃO/ COMERCIAL TV 50"TV 65"</div>
<div class="l" style="left:11.17px;top:589.30px;letter-spacing:0.172px;">Desc &nbsp;Funcao</div>
<div class="l" style="left:735.57px;top:587.30px;letter-spacing:0.098px;">Requisição</div>
<div class="f" style="left:12px;top:602px;width:700px;height:16px;line-height:14px;padding-left:1px;"></div>
<div class="f" style="left:717px;top:602px;width:73px;height:16px;line-height:14px;padding-left:1px;"></div>
<div class="l" style="left:10.47px;top:623.30px;letter-spacing:-0.079px;">Nota Remessa</div>
<div class="f" style="left:85px;top:622px;width:318px;height:16px;line-height:14px;padding-left:1px;"></div>
<div class="l" style="left:405.67px;top:623.30px;letter-spacing:-0.026px;">Nota Retorno</div>
<div class="f" style="left:472px;top:622px;width:318px;height:16px;line-height:14px;padding-left:1px;"></div>
<div class="ln" style="left:0;top:660px;width:960px;height:21px;overflow:hidden">
<div class="l" style="left:10.80px;top:11.30px;letter-spacing:0.061px;">Situação Temporaria</div>
<div class="f dd" style="left:112px;top:7px;width:182px;height:20px;line-height:18px;padding-left:5px;"><div style="position:absolute;right:0;top:0;bottom:0;width:14px;background:#e6ebf4"></div><div style="position:absolute;right:3px;top:8px;width:0;height:0;border-left:4px solid transparent;border-right:4px solid transparent;border-top:4px solid #5f6070"></div></div>
<div class="f" style="left:324px;top:7px;width:97px;height:20px;line-height:18px;padding-left:1px;"></div>
<div class="f" style="left:472px;top:7px;width:318px;height:20px;line-height:18px;padding-left:1px;"></div>
<div class="l" style="left:298.57px;top:9.30px;letter-spacing:-0.386px;">Data</div>
<div class="l" style="left:441.80px;top:9.30px;letter-spacing:0.203px;">Obs.</div>
</div>
<svg style="position:absolute;left:831px;top:549.5px" width="70" height="70" viewBox="0 0 70 70"><text x="0" y="66.5" font-family="Liberation Sans" font-weight="bold" font-size="93" textLength="67.5" lengthAdjust="spacingAndGlyphs">A</text></svg>
<div class="l" style="left:900.23px;top:604.19px;font-size:11px;">®</div>
<div class="l" style="left:834.94px;top:617.08px;font-weight:bold;font-size:11.3px;letter-spacing:0.168px;">Ativo &nbsp;Fixo</div>
</body></html>
